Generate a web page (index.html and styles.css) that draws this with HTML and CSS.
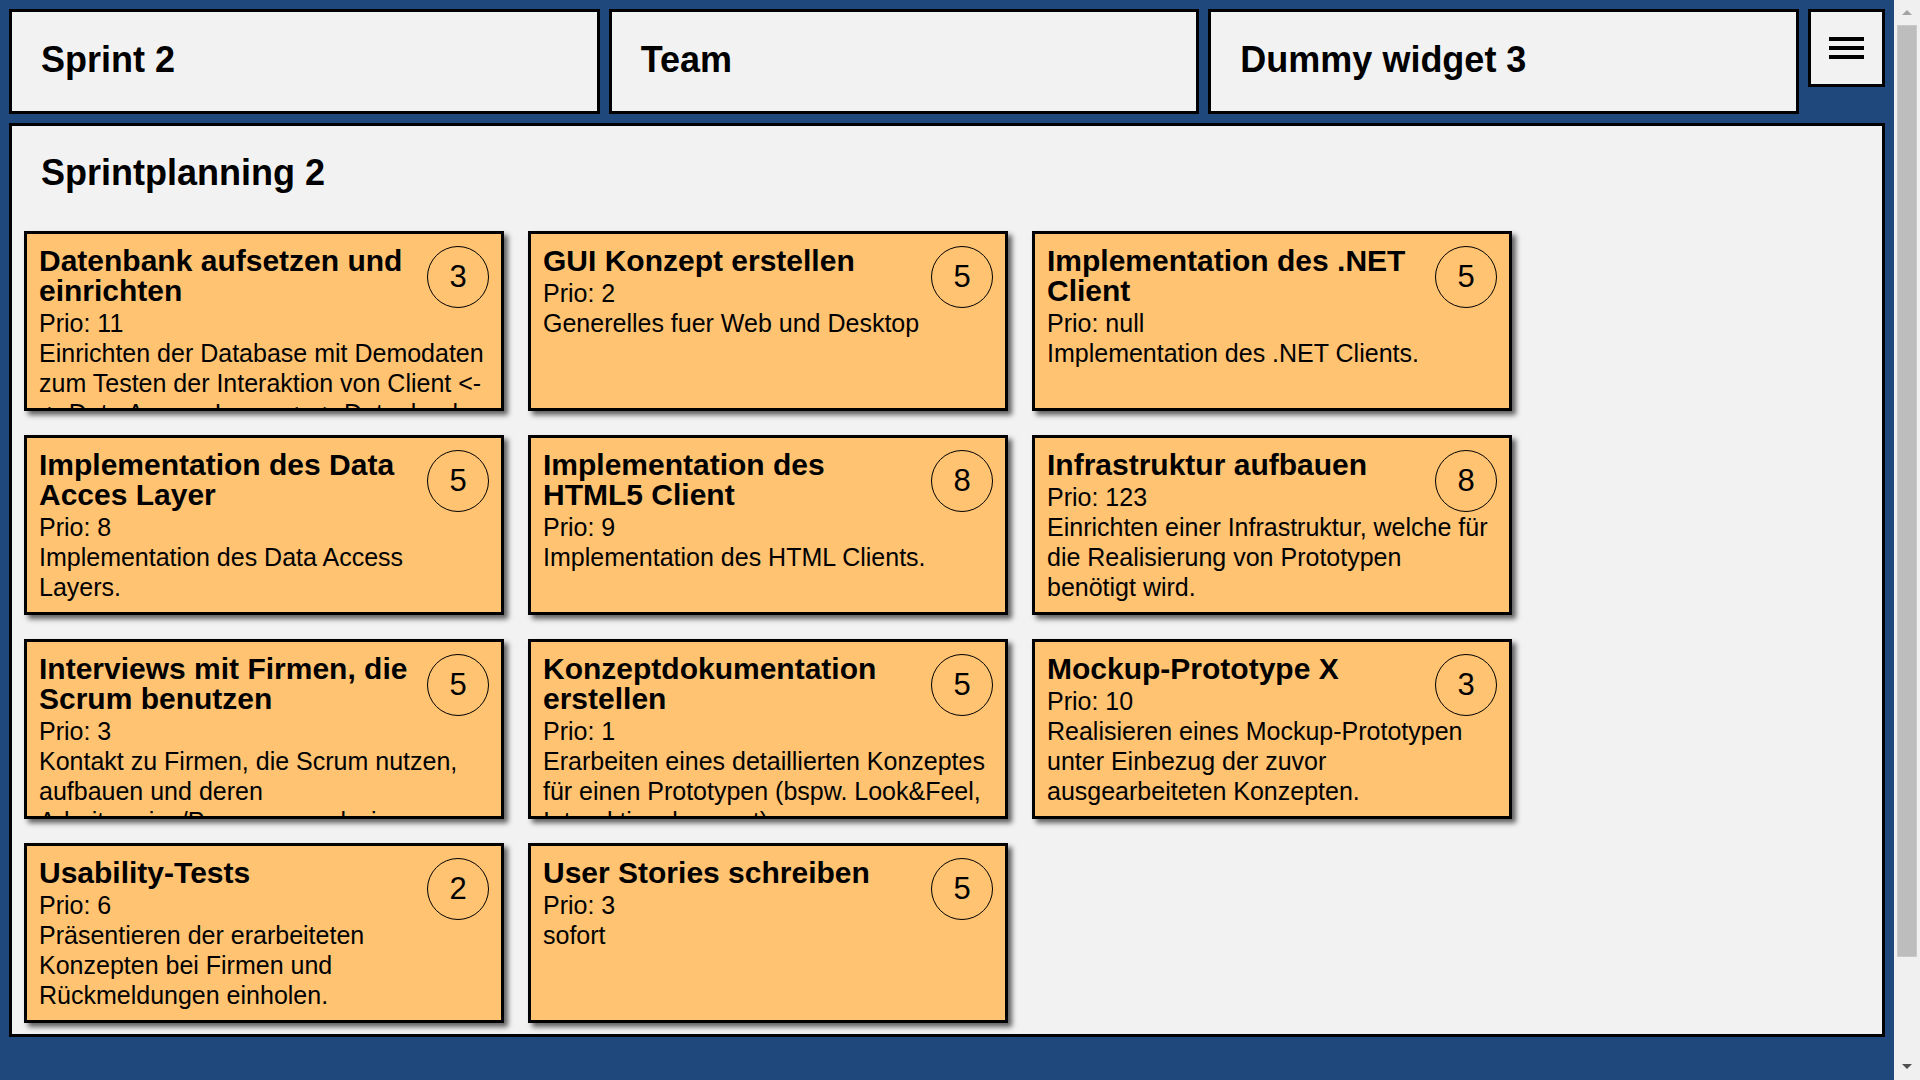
FILE: index.html
```html
<!DOCTYPE html>
<html lang="de">
<head>
<meta charset="utf-8">
<title>Sprintplanning 2</title>
<link rel="stylesheet" href="styles.css">
</head>
<body>
<div class="app">
  <header class="topbar">
    <section class="widget"><h1 class="widget-title">Sprint 2</h1></section>
    <section class="widget"><h1 class="widget-title">Team</h1></section>
    <section class="widget"><h1 class="widget-title">Dummy widget 3</h1></section>
    <button class="menu-btn" type="button" aria-label="Menü">
      <span class="bar"></span><span class="bar"></span><span class="bar"></span>
    </button>
  </header>

  <main class="panel">
    <div class="panel-header"><h2 class="panel-title">Sprintplanning 2</h2></div>
    <div class="board">
      <article class="card">
        <div class="points">3</div>
        <h3 class="card-title">Datenbank aufsetzen und einrichten</h3>
        <p class="prio">Prio: 11</p>
        <p class="desc">Einrichten der Database mit Demodaten zum Testen der Interaktion von Client &lt;- -&gt; Data Access Layer &lt;- -&gt; Datenbank.</p>
      </article>
      <article class="card">
        <div class="points">5</div>
        <h3 class="card-title">GUI Konzept erstellen</h3>
        <p class="prio">Prio: 2</p>
        <p class="desc">Generelles fuer Web und Desktop</p>
      </article>
      <article class="card">
        <div class="points">5</div>
        <h3 class="card-title">Implementation des .NET Client</h3>
        <p class="prio">Prio: null</p>
        <p class="desc">Implementation des .NET Clients.</p>
      </article>

      <article class="card">
        <div class="points">5</div>
        <h3 class="card-title">Implementation des Data Acces Layer</h3>
        <p class="prio">Prio: 8</p>
        <p class="desc">Implementation des Data Access Layers.</p>
      </article>
      <article class="card">
        <div class="points">8</div>
        <h3 class="card-title">Implementation des HTML5 Client</h3>
        <p class="prio">Prio: 9</p>
        <p class="desc">Implementation des HTML Clients.</p>
      </article>
      <article class="card">
        <div class="points">8</div>
        <h3 class="card-title">Infrastruktur aufbauen</h3>
        <p class="prio">Prio: 123</p>
        <p class="desc">Einrichten einer Infrastruktur, welche für die Realisierung von Prototypen benötigt wird.</p>
      </article>

      <article class="card">
        <div class="points">5</div>
        <h3 class="card-title">Interviews mit Firmen, die Scrum benutzen</h3>
        <p class="prio">Prio: 3</p>
        <p class="desc">Kontakt zu Firmen, die Scrum nutzen, aufbauen und deren Arbeitsweise/Prozesse analysieren.</p>
      </article>
      <article class="card">
        <div class="points">5</div>
        <h3 class="card-title">Konzeptdokumentation erstellen</h3>
        <p class="prio">Prio: 1</p>
        <p class="desc">Erarbeiten eines detaillierten Konzeptes für einen Prototypen (bspw. Look&amp;Feel, Interaktionskonzept).</p>
      </article>
      <article class="card">
        <div class="points">3</div>
        <h3 class="card-title">Mockup-Prototype X</h3>
        <p class="prio">Prio: 10</p>
        <p class="desc">Realisieren eines Mockup-Prototypen unter Einbezug der zuvor ausgearbeiteten Konzepten.</p>
      </article>

      <article class="card">
        <div class="points">2</div>
        <h3 class="card-title">Usability-Tests</h3>
        <p class="prio">Prio: 6</p>
        <p class="desc">Präsentieren der erarbeiteten Konzepten bei Firmen und Rückmeldungen einholen.</p>
      </article>
      <article class="card">
        <div class="points">5</div>
        <h3 class="card-title">User Stories schreiben</h3>
        <p class="prio">Prio: 3</p>
        <p class="desc">sofort</p>
      </article>
    </div>
  </main>
</div>

<div class="scrollbar" aria-hidden="true">
  <span class="sb-arrow sb-up"></span>
  <span class="sb-thumb"></span>
  <span class="sb-arrow sb-down"></span>
</div>
</body>
</html>
```
FILE: styles.css
```css
html, body {
  margin: 0;
  padding: 0;
}

body {
  background: #1f497d;
  font-family: "Liberation Sans", Arial, Helvetica, sans-serif;
  color: #000;
}

.app {
  width: 1876px;
  padding: 9px 0 175px 9px;
}

.topbar {
  display: flex;
  align-items: flex-start;
  gap: 9px;
}

.widget {
  flex: 1 1 0;
  height: 105px;
  box-sizing: border-box;
  border: 3px solid #000;
  background: #f2f2f2;
  display: flex;
  align-items: center;
  padding: 0 0 3px 29px;
}

.widget-title,
.panel-title {
  margin: 0;
  font-size: 36px;
  font-weight: 700;
}

.menu-btn {
  flex: 0 0 77px;
  width: 77px;
  height: 78px;
  box-sizing: border-box;
  border: 3px solid #000;
  background: #f2f2f2;
  padding: 0;
  margin: 0;
  display: flex;
  flex-direction: column;
  align-items: center;
  justify-content: center;
  gap: 5px;
  cursor: pointer;
}

.bar {
  display: block;
  width: 35px;
  height: 4px;
  background: #000;
}

.panel {
  display: block;
  margin-top: 9px;
  border: 3px solid #000;
  background: #f2f2f2;
}

.panel-header {
  height: 93px;
  display: flex;
  align-items: center;
  padding-left: 29px;
}

.board {
  display: flex;
  flex-wrap: wrap;
  gap: 24px;
  padding: 12px 12px 11px 12px;
}

.card {
  width: 480px;
  height: 180px;
  box-sizing: border-box;
  border: 3px solid #000;
  background: #ffc372;
  box-shadow: 4px 4px 5px rgba(0, 0, 0, 0.6);
  padding: 12px 14px 0 12px;
  overflow: hidden;
}

.points {
  float: right;
  width: 60px;
  height: 60px;
  margin: 0 -2px 0 10px;
  border: 1px solid #000;
  border-radius: 50%;
  display: flex;
  align-items: center;
  justify-content: center;
  font-size: 31px;
  font-weight: 400;
}

.card-title {
  margin: 0 0 2px;
  font-size: 30px;
  line-height: 30px;
  font-weight: 700;
}

.prio,
.desc {
  margin: 0;
  font-size: 25px;
  line-height: 30px;
}

/* browser scrollbar, as visible in the reference */
.scrollbar {
  position: fixed;
  top: 0;
  right: 0;
  width: 26px;
  height: 100vh;
  background: #f0f0f0;
}

.sb-arrow {
  position: absolute;
  left: 8px;
  width: 0;
  height: 0;
  border-left: 5px solid transparent;
  border-right: 5px solid transparent;
}

.sb-up {
  top: 10px;
  border-bottom: 5px solid #a3a3a3;
}

.sb-down {
  bottom: 11px;
  border-top: 5px solid #505050;
}

.sb-thumb {
  position: absolute;
  top: 25px;
  left: 3px;
  width: 20px;
  height: 932px;
  box-sizing: border-box;
  background: #bdbdbd;
  border: 1px solid #c9c9c9;
}
```
